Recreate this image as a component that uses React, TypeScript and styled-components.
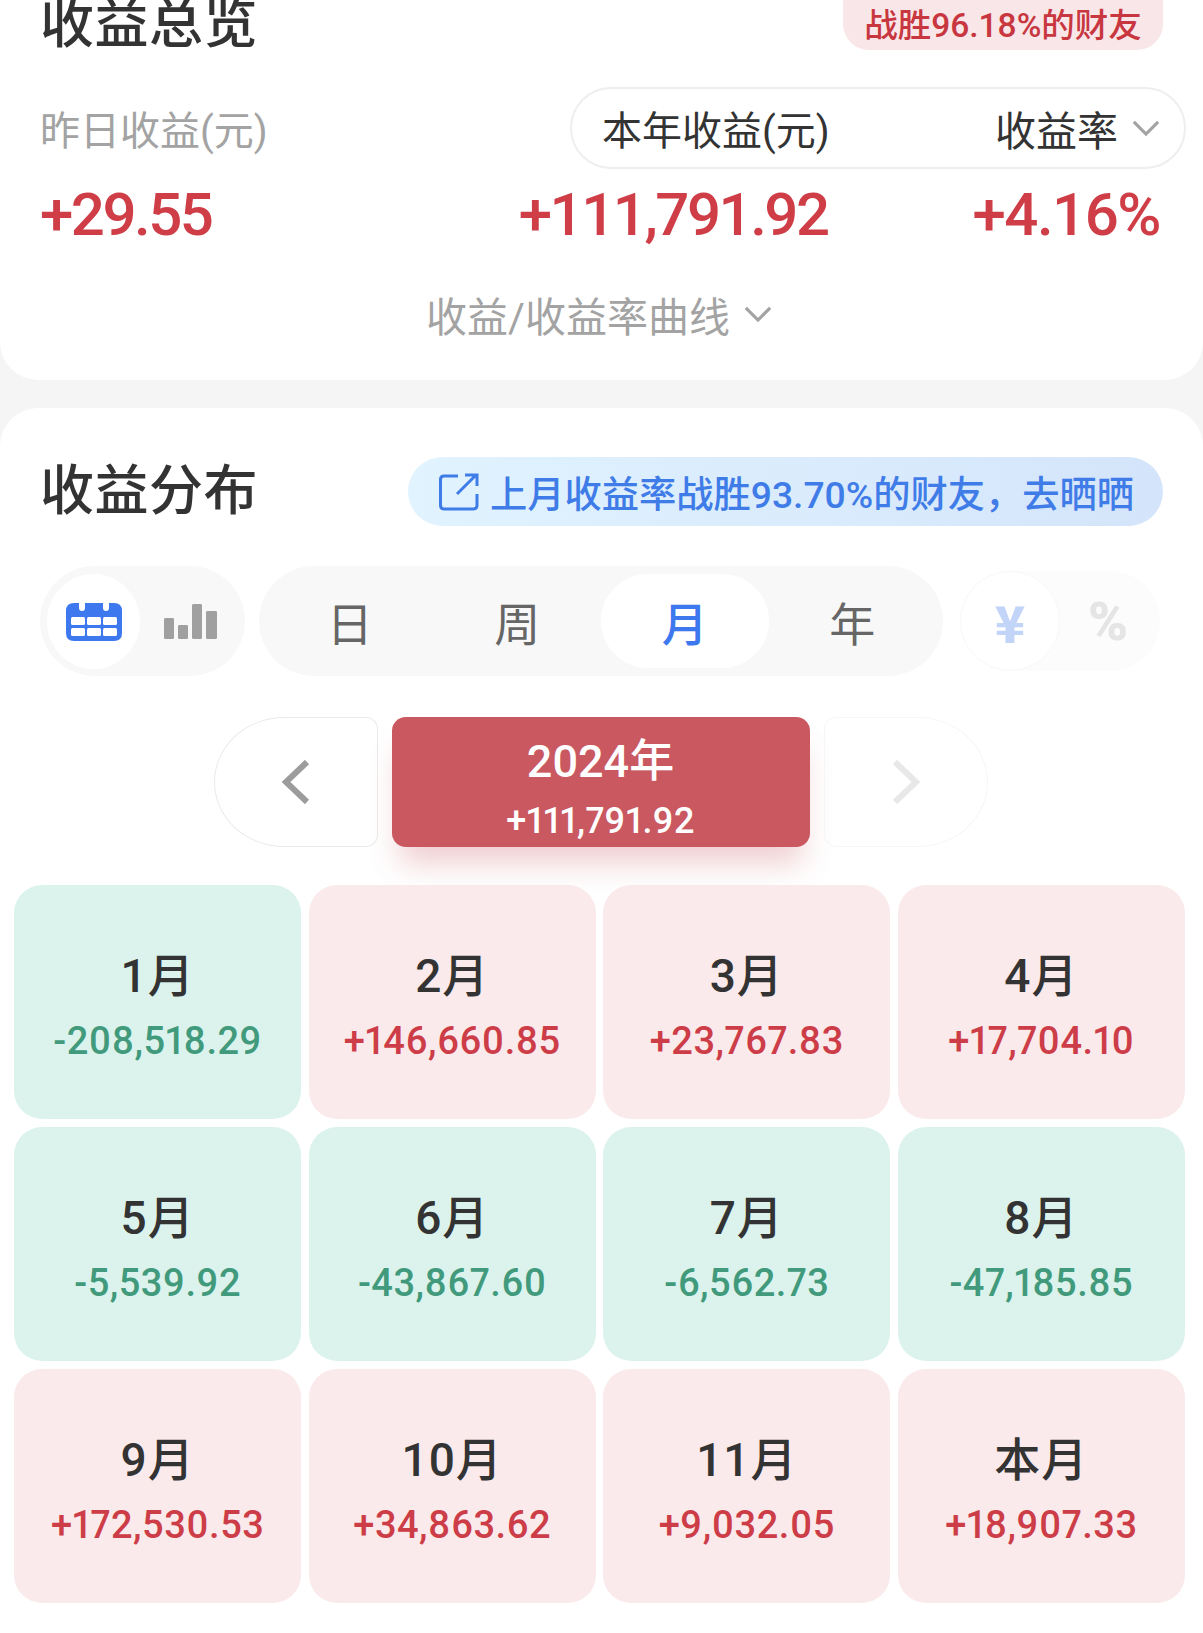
import { styled, createGlobalStyle } from 'styled-components';

const GlobalStyle = createGlobalStyle`
  html, body {
    margin: 0;
    padding: 0;
    background: #f5f5f5;
  }
  body {
    font-family: Roboto, "Noto Sans CJK SC", sans-serif;
  }
`;

type Month = { name: string; value: string };

const months: Month[] = [
  { name: '1月', value: '-208,518.29' },
  { name: '2月', value: '+146,660.85' },
  { name: '3月', value: '+23,767.83' },
  { name: '4月', value: '+17,704.10' },
  { name: '5月', value: '-5,539.92' },
  { name: '6月', value: '-43,867.60' },
  { name: '7月', value: '-6,562.73' },
  { name: '8月', value: '-47,185.85' },
  { name: '9月', value: '+172,530.53' },
  { name: '10月', value: '+34,863.62' },
  { name: '11月', value: '+9,032.05' },
  { name: '本月', value: '+18,907.33' },
];

const Chevron = ({ size, color }: { size: number; color: string }) => (
  <svg width={size} height={size * 0.6} viewBox="0 0 30 18" fill="none">
    <path d="M2 2 L15 15 L28 2" stroke={color} strokeWidth="3.4" />
  </svg>
);

const ShareIcon = () => (
  <svg width="40" height="38" viewBox="0 0 40 38" fill="none" stroke="#3f7ce8" strokeWidth="3">
    <path d="M19 3 H5 Q1.5 3 1.5 6.5 V32 Q1.5 36 5 36 H34 Q38 36 38 32 V21" />
    <path d="M18 21 L36 3 M26 2 H38 V13" />
  </svg>
);

const CalendarIcon = () => (
  <svg width="56" height="40" viewBox="0 0 56 40">
    <path
      d="M8 2 H48 Q56 2 56 10 V32 Q56 40 48 40 H8 Q0 40 0 32 V10 Q0 2 8 2 Z"
      fill="#3d78ee"
    />
    <rect x="13" y="0" width="6" height="10" rx="3" fill="#fff" />
    <rect x="37" y="0" width="6" height="10" rx="3" fill="#fff" />
    {[16, 27].map((y) =>
      [5, 21, 37].map((x) => <rect key={`${x}-${y}`} x={x} y={y} width="14" height="8" rx="1.5" fill="#fff" />),
    )}
  </svg>
);

const BarsIcon = () => (
  <svg width="53" height="35" viewBox="0 0 53 40" fill="#a0a0a0" preserveAspectRatio="none">
    <rect x="0" y="16" width="10" height="24" rx="1.5" />
    <rect x="14" y="24" width="10" height="16" rx="1.5" />
    <rect x="28" y="0" width="10" height="40" rx="1.5" />
    <rect x="42" y="8" width="11" height="32" rx="1.5" />
  </svg>
);

const NavArrow = ({ dir, color }: { dir: 'left' | 'right'; color: string }) => (
  <svg width="30" height="44" viewBox="0 0 30 44" fill="none">
    <path
      d={dir === 'left' ? 'M26 2 L5 22 L26 42' : 'M4 2 L25 22 L4 42'}
      stroke={color}
      strokeWidth="6"
    />
  </svg>
);

function App() {
  return (
    <Page>
      <GlobalStyle />
      <OverviewCard>
        <TitleRow>
          <Title>收益总览</Title>
          <RankBadge>战胜96.18%的财友</RankBadge>
        </TitleRow>
        <LabelRow>
          <MutedLabel>昨日收益(元)</MutedLabel>
          <PeriodSwitch>
            <span>本年收益(元)</span>
            <RateSelect>
              收益率
              <Chevron size={28} color="#a3a3a3" />
            </RateSelect>
          </PeriodSwitch>
        </LabelRow>
        <ValueRow>
          <BigValue $tight>+29.55</BigValue>
          <BigValue $tight $push>+111,791.92</BigValue>
          <BigValue>+4.16%</BigValue>
        </ValueRow>
        <CurveToggle>
          收益/收益率曲线
          <Chevron size={28} color="#a3a3a3" />
        </CurveToggle>
      </OverviewCard>

      <DistributionCard>
        <DistributionHead>
          <Title>收益分布</Title>
          <ShareBanner>
            <ShareIcon />
            上月收益率战胜93.70%的财友，去晒晒
          </ShareBanner>
        </DistributionHead>

        <ToolRow>
          <ViewGroup>
            <ViewOn>
              <CalendarIcon />
            </ViewOn>
            <ViewOff>
              <BarsIcon />
            </ViewOff>
          </ViewGroup>
          <RangeGroup>
            <RangeItem>日</RangeItem>
            <RangeItem>周</RangeItem>
            <RangeItem $active>月</RangeItem>
            <RangeItem>年</RangeItem>
          </RangeGroup>
          <UnitGroup>
            <UnitOn>¥</UnitOn>
            <UnitOff>%</UnitOff>
          </UnitGroup>
        </ToolRow>

        <YearNav>
          <NavButton $side="left">
            <NavArrow dir="left" color="#9c9c9c" />
          </NavButton>
          <YearBox>
            <YearName>2024年</YearName>
            <YearValue>+111,791.92</YearValue>
          </YearBox>
          <NavButton $side="right">
            <NavArrow dir="right" color="#e8e8e8" />
          </NavButton>
        </YearNav>

        <MonthGrid>
          {months.map((m) => {
            const loss = m.value.startsWith('-');
            return (
              <MonthTile key={m.name} $loss={loss}>
                <MonthName>{m.name}</MonthName>
                <MonthValue $loss={loss}>{m.value}</MonthValue>
              </MonthTile>
            );
          })}
        </MonthGrid>
      </DistributionCard>
    </Page>
  );
}

export default App;

const Page = styled.div`
  width: 1203px;
  height: 1633px;
  overflow: hidden;
  background: #f5f5f5;
`;

const OverviewCard = styled.section`
  height: 380px;
  box-sizing: border-box;
  padding: 0 40px;
  background: #fff;
  border-radius: 0 0 38px 38px;
`;

const TitleRow = styled.div`
  height: 50px;
  display: flex;
  align-items: center;
  justify-content: space-between;
`;

const Title = styled.h2`
  margin: 0;
  font-size: 54px;
  line-height: 60px;
  font-weight: 500;
  color: #333;
  letter-spacing: 0.5px;
`;

const RankBadge = styled.div`
  width: 320px;
  height: 70px;
  margin-top: -20px;
  padding-top: 15px;
  box-sizing: border-box;
  display: flex;
  align-items: center;
  justify-content: center;
  background: #f8e6e8;
  border-radius: 0 0 26px 26px;
  color: #c8363f;
  font-size: 33.5px;
  font-weight: 500;
  white-space: nowrap;
`;

const LabelRow = styled.div`
  margin-top: 37px;
  margin-right: -23px;
  display: flex;
  align-items: center;
  justify-content: space-between;
`;

const MutedLabel = styled.div`
  font-size: 40px;
  color: #a3a3a3;
`;

const PeriodSwitch = styled.div`
  width: 616px;
  height: 82px;
  box-sizing: border-box;
  padding: 0 24px 0 30px;
  display: flex;
  align-items: center;
  justify-content: space-between;
  border: 2px solid #eeeeee;
  border-radius: 41px;
  font-size: 40px;
  color: #333;
`;

const RateSelect = styled.div`
  display: flex;
  align-items: center;
  gap: 14px;
  font-size: 41px;
`;

const ValueRow = styled.div`
  margin-top: 11px;
  padding-right: 3px;
  display: flex;
  align-items: center;
  gap: 145px;
`;

const BigValue = styled.div<{ $push?: boolean; $tight?: boolean }>`
  ${(p) => (p.$push ? 'margin-left: auto;' : '')}
  font-size: 60px;
  line-height: 70px;
  font-weight: 500;
  letter-spacing: ${(p) => (p.$tight ? '-2.5px' : '-1.5px')};
  color: #cf3d47;
`;

const CurveToggle = styled.div`
  margin-top: 34px;
  display: flex;
  align-items: center;
  justify-content: center;
  gap: 14px;
  font-size: 41px;
  color: #a3a3a3;
  padding-right: 5px;
`;

const DistributionCard = styled.section`
  margin-top: 28px;
  height: 1225px;
  background: #fff;
  border-radius: 38px 38px 0 0;
`;

const DistributionHead = styled.div`
  height: 118px;
  padding: 49px 40px 0 40px;
  box-sizing: border-box;
  display: flex;
  align-items: center;
  justify-content: space-between;
`;

const ShareBanner = styled.div`
  width: 755px;
  height: 69px;
  box-sizing: border-box;
  padding-left: 31px;
  display: flex;
  align-items: center;
  gap: 11px;
  border-radius: 35px;
  background: linear-gradient(90deg, #e0f3fe, #d4e5fb);
  color: #3f7ce8;
  font-size: 37.25px;
  font-weight: 500;
  white-space: nowrap;
`;

const ToolRow = styled.div`
  margin-top: 40px;
  padding-left: 40px;
  display: flex;
  align-items: center;
  gap: 14px;
`;

const ViewGroup = styled.div`
  width: 205px;
  height: 110px;
  box-sizing: border-box;
  padding: 8px 7px;
  display: flex;
  align-items: center;
  background: #f8f8f8;
  border-radius: 55px;
`;

const ViewOn = styled.div`
  width: 93px;
  height: 95px;
  display: flex;
  align-items: center;
  justify-content: center;
  background: #fff;
  border-radius: 50%;
`;

const ViewOff = styled.div`
  margin-left: 24px;
  display: flex;
`;

const RangeGroup = styled.div`
  width: 684px;
  height: 110px;
  box-sizing: border-box;
  padding: 8px 7px 8px 7px;
  display: grid;
  grid-template-columns: repeat(4, 1fr);
  background: #f8f8f8;
  border-radius: 55px;
`;

const RangeItem = styled.div<{ $active?: boolean }>`
  display: flex;
  align-items: center;
  justify-content: center;
  border-radius: 47px;
  background: ${(p) => (p.$active ? '#fff' : 'transparent')};
  color: ${(p) => (p.$active ? '#3d78ee' : '#666')};
  font-size: 46px;
  font-weight: ${(p) => (p.$active ? 500 : 400)};
`;

const UnitGroup = styled.div`
  margin-left: 3px;
  width: 200px;
  height: 100px;
  display: flex;
  align-items: center;
  background: #fcfcfc;
  border-radius: 50px;
`;

const UnitOn = styled.div`
  width: 98px;
  height: 98px;
  display: flex;
  align-items: center;
  justify-content: center;
  background: #fff;
  border: 1px solid #f8f8f8;
  border-radius: 50%;
  color: #c2d5f9;
  font-family: "Noto Sans CJK SC", sans-serif;
  font-size: 50px;
  font-weight: 900;
`;

const UnitOff = styled.div`
  margin-left: 28px;
  color: #e5e5e5;
  font-size: 54px;
  font-weight: 900;
`;

const YearNav = styled.div`
  margin-top: 41px;
  display: flex;
  justify-content: center;
  gap: 14px;
  padding-right: 2px;
`;

const NavButton = styled.div<{ $side: 'left' | 'right' }>`
  width: 164px;
  height: 130px;
  box-sizing: border-box;
  display: flex;
  align-items: center;
  justify-content: center;
  border: 1px solid ${(p) => (p.$side === 'left' ? '#eaeaea' : '#f6f6f6')};
  border-radius: ${(p) =>
    p.$side === 'left' ? '70px 12px 12px 70px / 65px 12px 12px 65px' : '12px 70px 70px 12px / 12px 65px 65px 12px'};
`;

const YearBox = styled.div`
  width: 418px;
  height: 130px;
  padding-top: 12px;
  box-sizing: border-box;
  display: flex;
  flex-direction: column;
  align-items: center;
  justify-content: center;
  background: #c95860;
  border-radius: 14px;
  box-shadow: 0 24px 30px -8px rgba(201, 88, 96, 0.3);
  color: #fff;
`;

const YearName = styled.div`
  font-size: 45px;
  line-height: 56px;
  font-weight: 500;
`;

const YearValue = styled.div`
  margin-top: 9px;
  font-size: 36px;
  line-height: 44px;
  font-weight: 500;
  font-variant-numeric: proportional-nums;
  letter-spacing: 0.3px;
`;

const MonthGrid = styled.div`
  margin-top: 38px;
  padding: 0 18px 0 14px;
  display: grid;
  grid-template-columns: repeat(4, 1fr);
  grid-auto-rows: 234.2px;
  gap: 7.6px 7.2px;
`;

const MonthTile = styled.div<{ $loss: boolean }>`
  box-sizing: border-box;
  padding-top: 60px;
  display: flex;
  flex-direction: column;
  align-items: center;
  border-radius: 28px;
  background: ${(p) => (p.$loss ? '#dcf3ed' : '#faeaec')};
`;

const MonthName = styled.div`
  font-size: 46px;
  line-height: 62px;
  font-weight: 500;
  color: #333;
  letter-spacing: 1px;
`;

const MonthValue = styled.div<{ $loss: boolean }>`
  margin-top: 9px;
  font-size: 38px;
  line-height: 50px;
  font-weight: 500;
  font-variant-numeric: proportional-nums;
  letter-spacing: 0.5px;
  color: ${(p) => (p.$loss ? '#429a7c' : '#cd3d48')};
`;
